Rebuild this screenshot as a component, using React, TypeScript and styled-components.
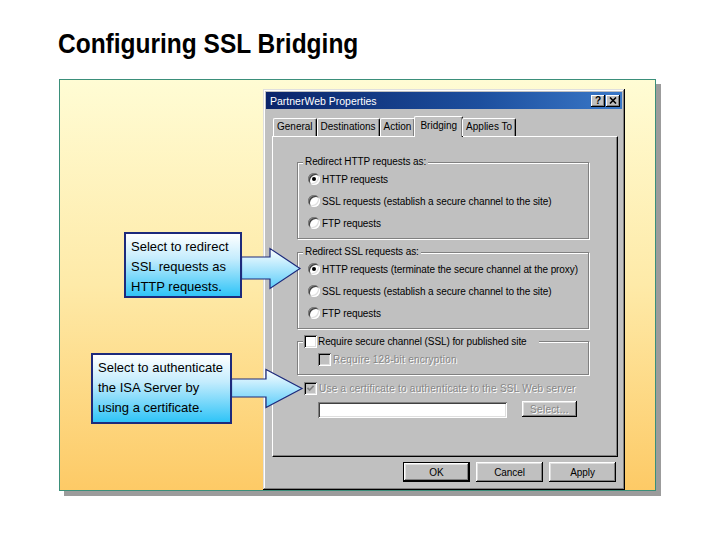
import React from 'react'
import styled, { createGlobalStyle } from 'styled-components'

const GlobalStyle = createGlobalStyle`
  html, body {
    margin: 0;
    padding: 0;
    background: #fff;
  }
  body {
    font-family: 'Liberation Sans', Arial, sans-serif;
  }
`

const Page = styled.div`
  position: relative;
  width: 720px;
  height: 540px;
  overflow: hidden;
`

const SlideTitle = styled.h1`
  margin: 30px 0 0 58px;
  font-size: 28px;
  line-height: 28px;
  font-weight: bold;
  color: #000;
  white-space: nowrap;
  transform: scaleX(0.875);
  transform-origin: left center;
`

const Panel = styled.div`
  position: relative;
  box-sizing: border-box;
  width: 597px;
  height: 412px;
  margin: 21px 0 0 59px;
  padding: 9px 0 0 203px;
  border: 1px solid #3b8f7a;
  background: linear-gradient(180deg, #fffcd4 0%, #feeaa8 50%, #fdca66 100%);
  box-shadow: 5px 5px 0 #9c9c9c;
`

const Dialog = styled.div`
  box-sizing: border-box;
  width: 362px;
  height: 401px;
  padding: 3px;
  display: flex;
  flex-direction: column;
  background: #c0c0c0;
  box-shadow: inset -1px -1px #000, inset 1px 1px #dfdfdf, inset -2px -2px #808080, inset 2px 2px #fff;
  font-size: 10px;
  letter-spacing: -0.08px;
  color: #000;
`

const TitleBar = styled.div`
  height: 17px;
  display: flex;
  align-items: center;
  gap: 1px;
  padding: 0 2px 0 4px;
  background: linear-gradient(90deg, #0a246a 0%, #1d4f9e 60%, #3a78c8 100%);
  color: #fff;
  font-size: 10.5px;
  letter-spacing: 0;
`

const TitleText = styled.span`
  flex: 1;
  white-space: nowrap;
`

const CaptionButton = styled.span`
  box-sizing: border-box;
  width: 14px;
  height: 12px;
  display: flex;
  align-items: center;
  justify-content: center;
  background: #c0c0c0;
  box-shadow: inset -1px -1px #000, inset 1px 1px #fff, inset -2px -2px #808080;
  color: #000;
  font-weight: bold;
  font-size: 10px;
  line-height: 10px;
`

const TabArea = styled.div`
  margin: 7px 4px 0 6px;
  display: flex;
  flex-direction: column;
`

const TabStrip = styled.div`
  position: relative;
  z-index: 1;
  height: 20px;
  display: flex;
  align-items: flex-end;
  padding-left: 1px;
  letter-spacing: 0;
`

const Tab = styled.div<{ $active?: boolean }>`
  position: relative;
  box-sizing: border-box;
  height: ${p => (p.$active ? 21 : 18)}px;
  margin: 0 ${p => (p.$active ? -1 : 0)}px ${p => (p.$active ? -1 : 0)}px;
  padding: 0 ${p => (p.$active ? 5 : 3)}px;
  line-height: ${p => (p.$active ? 17 : 16)}px;
  border-top: 1px solid #fff;
  border-left: 1px solid #fff;
  border-right: 1px solid #000;
  border-radius: 2px 2px 0 0;
  box-shadow: inset -1px 0 #808080;
  background: #c0c0c0;
  white-space: nowrap;
`

const TabPanel = styled.div`
  box-sizing: border-box;
  height: 321px;
  display: flex;
  flex-direction: column;
  align-items: flex-start;
  padding: 25px 0 0 24px;
  border-top: 1px solid #fff;
  border-left: 1px solid #fff;
  border-right: 1px solid #000;
  border-bottom: 1px solid #000;
  box-shadow: inset -1px -1px #808080;
`

const GroupBox = styled.div<{ $gap?: number }>`
  box-sizing: border-box;
  width: 292px;
  margin-top: ${p => p.$gap ?? 0}px;
  display: flex;
  flex-direction: column;
  padding-bottom: 4px;
  border: 1px solid #808080;
  box-shadow: 1px 1px 0 #fff, inset 1px 1px 0 #fff;
`

const Legend = styled.div`
  align-self: flex-start;
  height: 12px;
  line-height: 12px;
  margin: -7px 0 0 5px;
  padding: 0 2px;
  background: #c0c0c0;
  white-space: nowrap;
`

const CheckLegend = styled.div`
  align-self: flex-start;
  height: 13px;
  display: flex;
  align-items: center;
  gap: 1px;
  margin: -7px 0 0 5px;
  padding: 0 12px 0 1px;
  background: #c0c0c0;
  white-space: nowrap;
`

const OptionRow = styled.div<{ $height?: number; $indent?: number; $top?: number; $disabled?: boolean }>`
  height: ${p => p.$height ?? 22}px;
  display: flex;
  align-items: center;
  gap: 2px;
  margin-top: ${p => p.$top ?? 0}px;
  padding-left: ${p => p.$indent ?? 10}px;
  white-space: nowrap;
  color: ${p => (p.$disabled ? '#868686' : '#000')};
  letter-spacing: ${p => (p.$disabled ? '0.25px' : 'inherit')};
  text-shadow: ${p => (p.$disabled ? '1px 1px 0 #fff' : 'none')};
`

const RadioDot = styled.span<{ $checked?: boolean }>`
  flex: none;
  width: 12px;
  height: 12px;
  display: flex;
  align-items: center;
  justify-content: center;
  border-radius: 50%;
  background: #fff;
  box-shadow: inset 1px 1px #808080, inset -1px -1px #fff, inset 2px 2px #404040, inset -2px -2px #dfdfdf;

  &::after {
    content: '';
    display: ${p => (p.$checked ? 'block' : 'none')};
    width: 4px;
    height: 4px;
    border-radius: 50%;
    background: #000;
  }
`

const CheckBox = styled.span<{ $disabled?: boolean }>`
  flex: none;
  box-sizing: border-box;
  width: 13px;
  height: 13px;
  display: flex;
  align-items: center;
  justify-content: center;
  background: ${p => (p.$disabled ? '#c0c0c0' : '#fff')};
  box-shadow: inset 1px 1px #808080, inset -1px -1px #fff, inset 2px 2px #000, inset -2px -2px #dfdfdf;
`

const FieldRow = styled.div`
  display: flex;
  align-items: flex-start;
  gap: 15px;
  margin: 3px 0 0 21px;
`

const TextBox = styled.div`
  box-sizing: border-box;
  width: 189px;
  height: 16px;
  margin-top: 1px;
  background: #fff;
  box-shadow: inset 1px 1px #808080, inset -1px -1px #fff, inset 2px 2px #404040, inset -2px -2px #dfdfdf;
`

const PushButton = styled.div<{ $width: number; $height: number; $default?: boolean; $disabled?: boolean }>`
  box-sizing: border-box;
  width: ${p => p.$width}px;
  height: ${p => p.$height}px;
  display: flex;
  align-items: center;
  justify-content: center;
  border: ${p => (p.$default ? '1px solid #000' : 'none')};
  background: #c0c0c0;
  box-shadow: inset -1px -1px #000, inset 1px 1px #fff, inset -2px -2px #808080, inset 2px 2px #dfdfdf;
  color: ${p => (p.$disabled ? '#868686' : '#000')};
  letter-spacing: ${p => (p.$disabled ? '0.3px' : 'inherit')};
  text-shadow: ${p => (p.$disabled ? '1px 1px 0 #fff' : 'none')};
`

const ButtonRow = styled.div`
  display: flex;
  justify-content: flex-end;
  gap: 6px;
  margin-top: 5px;
  padding-right: 6px;
`

const Callout = styled.div<{ $left: number; $top: number; $width: number; $height: number }>`
  position: absolute;
  z-index: 3;
  left: ${p => p.$left}px;
  top: ${p => p.$top}px;
  box-sizing: border-box;
  width: ${p => p.$width}px;
  height: ${p => p.$height}px;
  padding: 3px 5px;
  border: 2px solid #1d2a7c;
  background: linear-gradient(180deg, #ffffff 0%, #c4ecfd 40%, #2fc4f7 100%);
  font-size: 13px;
  line-height: 20px;
  color: #000;
`

const ArrowSvg = styled.svg<{ $left: number; $top: number }>`
  position: absolute;
  z-index: 2;
  left: ${p => p.$left}px;
  top: ${p => p.$top}px;
  overflow: visible;
`

const Check = () => (
  <svg width="9" height="9" viewBox="0 0 9 9">
    <path d="M1.5 3.8 L3.6 6 L7.6 1.8" fill="none" stroke="#808080" strokeWidth="1.7" />
  </svg>
)

const CloseGlyph = () => (
  <svg width="8" height="7" viewBox="0 0 8 7">
    <path d="M1 0.5 L7 6.5 M7 0.5 L1 6.5" stroke="#000" strokeWidth="1.6" />
  </svg>
)

type ArrowProps = { id: string; left: number; top: number; w: number; h: number; d: string }

const Arrow = ({ id, left, top, w, h, d }: ArrowProps) => (
  <ArrowSvg $left={left} $top={top} width={w} height={h} viewBox={`0 0 ${w} ${h}`}>
    <defs>
      <linearGradient id={id} x1="0" y1="0" x2="0" y2="1">
        <stop offset="0" stopColor="#ffffff" />
        <stop offset="1" stopColor="#5ccdfa" />
      </linearGradient>
    </defs>
    <path d={d} fill={`url(#${id})`} stroke="#1d2a7c" strokeWidth="1.2" strokeLinejoin="miter" />
  </ArrowSvg>
)

const tabs = ['General', 'Destinations', 'Action', 'Bridging', 'Applies To']

const Radio = ({ label, checked }: { label: string; checked?: boolean }) => (
  <OptionRow>
    <RadioDot $checked={checked} />
    <span>{label}</span>
  </OptionRow>
)

export default function App() {
  return (
    <Page>
      <GlobalStyle />
      <SlideTitle>Configuring SSL Bridging</SlideTitle>

      <Panel>
        <Dialog>
          <TitleBar>
            <TitleText>PartnerWeb Properties</TitleText>
            <CaptionButton>?</CaptionButton>
            <CaptionButton>
              <CloseGlyph />
            </CaptionButton>
          </TitleBar>

          <TabArea>
            <TabStrip>
              {tabs.map(t => (
                <Tab key={t} $active={t === 'Bridging'}>
                  {t}
                </Tab>
              ))}
            </TabStrip>

            <TabPanel>
              <GroupBox>
                <Legend>Redirect HTTP requests as:</Legend>
                <Radio label="HTTP requests" checked />
                <Radio label="SSL requests (establish a secure channel to the site)" />
                <Radio label="FTP requests" />
              </GroupBox>

              <GroupBox $gap={13}>
                <Legend>Redirect SSL requests as:</Legend>
                <Radio label="HTTP requests (terminate the secure channel at the proxy)" checked />
                <Radio label="SSL requests (establish a secure channel to the site)" />
                <Radio label="FTP requests" />
              </GroupBox>

              <GroupBox $gap={12}>
                <CheckLegend>
                  <CheckBox />
                  <span>Require secure channel (SSL) for published site</span>
                </CheckLegend>
                <OptionRow $indent={20} $disabled>
                  <CheckBox $disabled />
                  <span>Require 128-bit encryption</span>
                </OptionRow>
              </GroupBox>

              <OptionRow $height={20} $top={3} $indent={7} $disabled>
                <CheckBox $disabled>
                  <Check />
                </CheckBox>
                <span>Use a certificate to authenticate to the SSL Web server</span>
              </OptionRow>

              <FieldRow>
                <TextBox />
                <PushButton $width={55} $height={16} $disabled>
                  Select...
                </PushButton>
              </FieldRow>
            </TabPanel>
          </TabArea>

          <ButtonRow>
            <PushButton $width={67} $height={20} $default>
              OK
            </PushButton>
            <PushButton $width={67} $height={20}>
              Cancel
            </PushButton>
            <PushButton $width={67} $height={20}>
              Apply
            </PushButton>
          </ButtonRow>
        </Dialog>

        <Callout $left={64} $top={152} $width={118} $height={66}>
          Select to redirect
          <br />
          SSL requests as
          <br />
          HTTP requests.
        </Callout>
        <Arrow id="arrowFillA" left={181} top={168} w={60} h={41} d="M0.5 9 H29 V0.5 L59 20.5 L29 40.5 V31 H0.5 Z" />

        <Callout $left={31} $top={273} $width={141} $height={71}>
          Select to authenticate
          <br />
          the ISA Server by
          <br />
          using a certificate.
        </Callout>
        <Arrow id="arrowFillB" left={171} top={289} w={72} h={40} d="M0.5 10 H35 V0.5 L71 19.5 L35 38.5 V28 H0.5 Z" />
      </Panel>
    </Page>
  )
}
